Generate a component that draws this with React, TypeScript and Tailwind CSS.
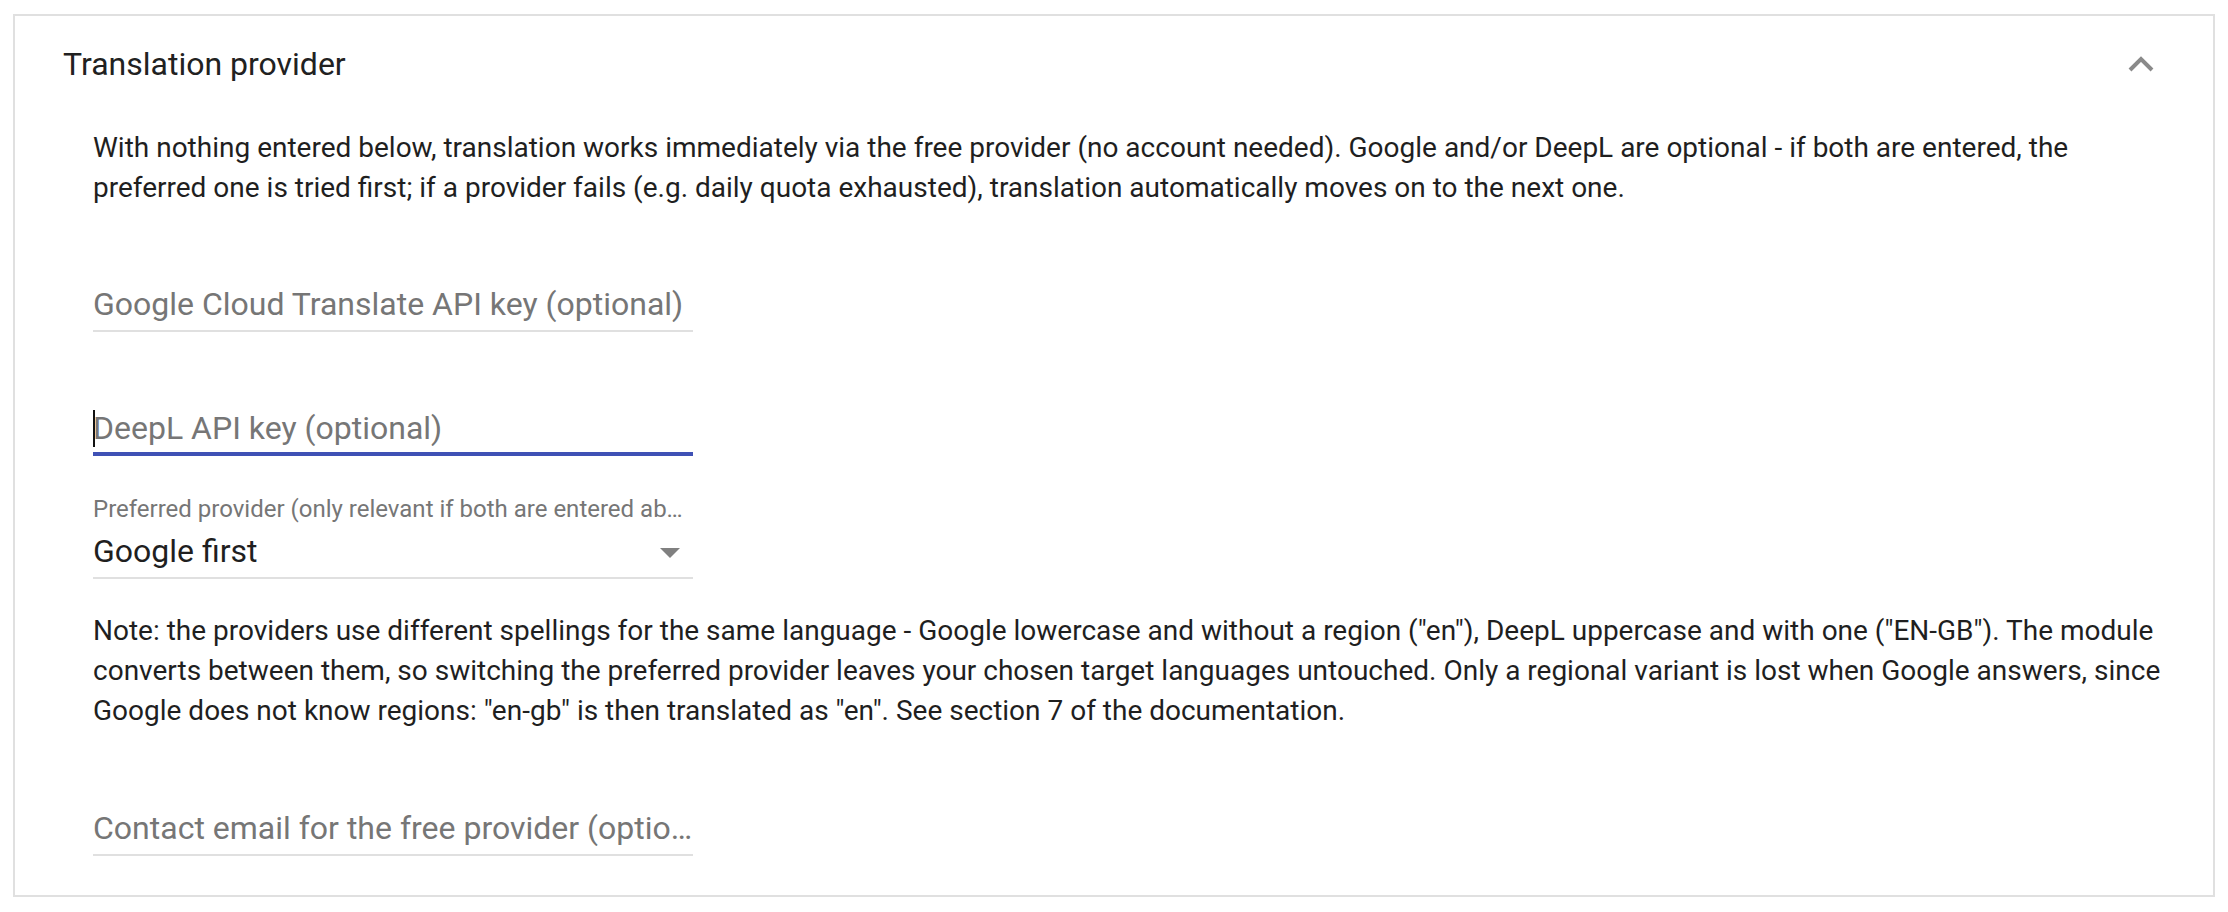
import React from 'react';

type FieldProps = {
  placeholder: string;
  focused?: boolean;
  className?: string;
};

// Underline of a form field: thin grey at rest, thicker indigo when focused
function Underline({ focused = false }: { focused?: boolean }) {
  return focused ? (
    <div className="mt-[6px] h-[4px] bg-[#3f51b5]" />
  ) : (
    <div className="mt-[8px] h-[2px] bg-[#e0e0e0]" />
  );
}

function TextField({ placeholder, focused = false, className = '' }: FieldProps) {
  return (
    <div className={`w-[600px] ${className}`}>
      <div className="flex h-[36px] items-center text-[32px] leading-[36px] text-[#767676]">
        {focused && <span className="mr-[-2px] inline-block h-[37px] w-[2px] shrink-0 bg-[#111]" />}
        <span className="truncate">{placeholder}</span>
      </div>
      <Underline focused={focused} />
    </div>
  );
}

function SelectField({ label, value, className = '' }: { label: string; value: string; className?: string }) {
  return (
    <div className={`w-[600px] ${className}`}>
      <div className="truncate text-[24px] leading-[28px] text-[#767676]">{label}</div>
      <div className="mt-[10px] flex h-[36px] items-center justify-between pr-[13px]">
        <span className="text-[32px] leading-[36px] text-[#1f1f1f]">{value}</span>
        <span className="mt-[3px] h-0 w-0 border-x-[10px] border-t-[10px] border-x-transparent border-t-[#808080]" />
      </div>
      <Underline />
    </div>
  );
}

export default function App() {
  return (
    <div className="min-h-screen bg-white px-[13px] pt-[14px] font-['Roboto',sans-serif]">
      <section className="border-2 border-[#e0e0e0] bg-white">
        <header className="flex h-[96px] items-center justify-between pl-[48px] pr-[58px]">
          <h2 className="text-[32px] font-normal leading-[40px] text-[#212121]">Translation provider</h2>
          <svg width="28" height="18" viewBox="0 0 28 18" fill="none">
            <polyline points="3,15 14,4 25,15" stroke="#8a8a8a" strokeWidth="4" />
          </svg>
        </header>

        <div className="pb-[39px] pl-[78px] pr-[48px] pt-[16px] text-[28px] leading-[40px] text-[#1f1f1f]">
          <p>
            With nothing entered below, translation works immediately via the free provider (no account needed).
            Google and/or DeepL are optional - if both are entered, the preferred one is tried first; if a provider
            fails (e.g. daily quota exhausted), translation automatically moves on to the next one.
          </p>

          <TextField className="mt-[78px]" placeholder="Google Cloud Translate API key (optional)" />
          <TextField className="mt-[78px]" placeholder="DeepL API key (optional)" focused />

          <SelectField
            className="mt-[39px]"
            label="Preferred provider (only relevant if both are entered above)"
            value="Google first"
          />

          <p className="mt-[32px]">
            Note: the providers use different spellings for the same language - Google lowercase and without a region
            ("en"), DeepL uppercase and with one ("EN-GB"). The module converts between them, so switching the
            preferred provider leaves your chosen target languages untouched. Only a regional variant is lost when
            Google answers, since Google does not know regions: "en-gb" is then translated as "en". See section 7 of
            the documentation.
          </p>

          <TextField className="mt-[79px]" placeholder="Contact email for the free provider (optional)" />
        </div>
      </section>
    </div>
  );
}
